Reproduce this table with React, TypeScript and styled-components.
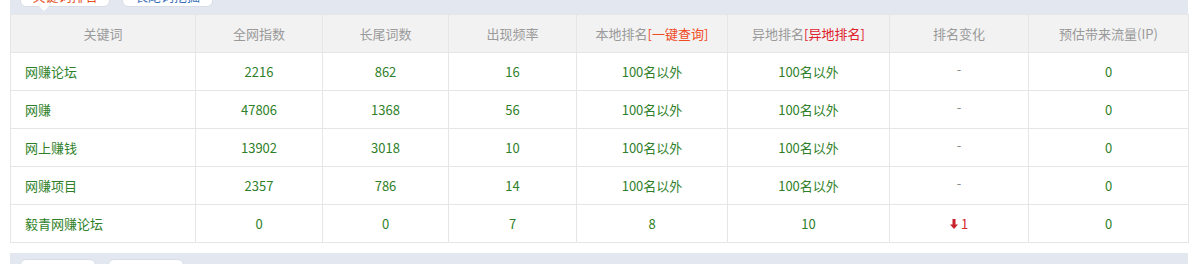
import { FC } from 'react'
import styled, { createGlobalStyle } from 'styled-components'

const GlobalStyle = createGlobalStyle`
  body {
    margin: 0;
    background: #fff;
    font-family: "Noto Sans CJK SC", "Liberation Sans", sans-serif;
    font-size: 13px;
  }
`

const Page = styled.div`
  width: 1196px;
  height: 264px;
  overflow: hidden;
  padding: 0 8px 0 10px;
  box-sizing: border-box;
`

const Bar = styled.div<{ $bottom?: boolean }>`
  display: flex;
  align-items: ${p => (p.$bottom ? 'flex-start' : 'flex-end')};
  gap: 12px;
  height: ${p => (p.$bottom ? '12px' : '14px')};
  padding: ${p => (p.$bottom ? '6px 10px 0' : '0 10px 7px')};
  box-sizing: border-box;
  background: #e3e7f0;
  position: relative;
  overflow: hidden;
  margin-top: ${p => (p.$bottom ? '10px' : '0')};
`

const Tab = styled.div<{ $w: number; $c?: string }>`
  flex: none;
  width: ${p => p.$w}px;
  height: 20px;
  background: #fff;
  border: 1px solid #d8dde8;
  border-radius: 6px;
  box-sizing: border-box;
  position: relative;
  font-size: 13px;
  line-height: 15px;
  text-align: center;
  color: ${p => p.$c ?? '#e5501e'};
`

const Pointer = styled.span`
  position: absolute;
  left: 18px;
  bottom: -5px;
  width: 0;
  height: 0;
  border-left: 5px solid transparent;
  border-right: 5px solid transparent;
  border-top: 5px solid #fff;
`

const CornerText = styled.span`
  margin-left: auto;
  margin-right: 0;
  color: #e03a3a;
  font-size: 13px;
  line-height: 13px;
  transform: translateY(-8px);
`

const Table = styled.table`
  width: 100%;
  border-collapse: collapse;
  table-layout: fixed;
  border: 1px solid #e6e6e6;
`

const Th = styled.th`
  height: 37px;
  background: #f2f2f2;
  color: #9a9a9a;
  font-weight: normal;
  font-size: 13px;
  border: 1px solid #e6e6e6;
  padding: 0;
`

const Td = styled.td<{ $left?: boolean }>`
  height: 37px;
  color: #2f7f2a;
  font-size: 13px;
  border: 1px solid #e6e6e6;
  text-align: ${p => (p.$left ? 'left' : 'center')};
  padding: ${p => (p.$left ? '0 0 0 14px' : '0')};
`

const Link = styled.span<{ $c: string }>`
  color: ${p => p.$c};
`

const Dash = styled.span`
  color: #888;
  position: relative;
  top: -3px;
`

const Down = styled.span`
  color: #d0282e;
  display: inline-flex;
  align-items: center;
  gap: 3px;
`

const widths = [185, 127, 126, 128, 151, 162, 139, 160]

const rows = [
  ['网赚论坛', '2216', '862', '16', '100名以外', '100名以外', null, '0'],
  ['网赚', '47806', '1368', '56', '100名以外', '100名以外', null, '0'],
  ['网上赚钱', '13902', '3018', '10', '100名以外', '100名以外', null, '0'],
  ['网赚项目', '2357', '786', '14', '100名以外', '100名以外', null, '0'],
  ['毅青网赚论坛', '0', '0', '7', '8', '10', 'down', '0'],
]

const App: FC = () => {
  return (
    <Page>
      <GlobalStyle />
      <Bar>
        <Tab $w={90}>
          关键词排名
          <Pointer />
        </Tab>
        <Tab $w={91} $c="#3a6fb8">长尾词挖掘</Tab>
        <CornerText>[排名查询]</CornerText>
      </Bar>
      <Table>
        <colgroup>
          {widths.map((w, i) => (
            <col key={i} style={{ width: w }} />
          ))}
        </colgroup>
        <thead>
          <tr>
            <Th>关键词</Th>
            <Th>全网指数</Th>
            <Th>长尾词数</Th>
            <Th>出现频率</Th>
            <Th>
              本地排名<Link $c="#f04b1e">[一键查询]</Link>
            </Th>
            <Th>
              异地排名<Link $c="#e0202a">[异地排名]</Link>
            </Th>
            <Th>排名变化</Th>
            <Th>预估带来流量(IP)</Th>
          </tr>
        </thead>
        <tbody>
          {rows.map((r, i) => (
            <tr key={i}>
              {r.map((c, j) => (
                <Td key={j} $left={j === 0}>
                  {j === 6 ? (
                    c === 'down' ? (
                      <Down>
                        <svg width="8" height="10" viewBox="0 0 8 10">
                          <path d="M2.5 0h3v5.5H8L4 10 0 5.5h2.5z" fill="#c8232c" />
                        </svg>
                        1
                      </Down>
                    ) : (
                      <Dash>-</Dash>
                    )
                  ) : (
                    c
                  )}
                </Td>
              ))}
            </tr>
          ))}
        </tbody>
      </Table>
      <Bar $bottom>
        <Tab $w={76} />
        <Tab $w={76} />
      </Bar>
    </Page>
  )
}

export default App
